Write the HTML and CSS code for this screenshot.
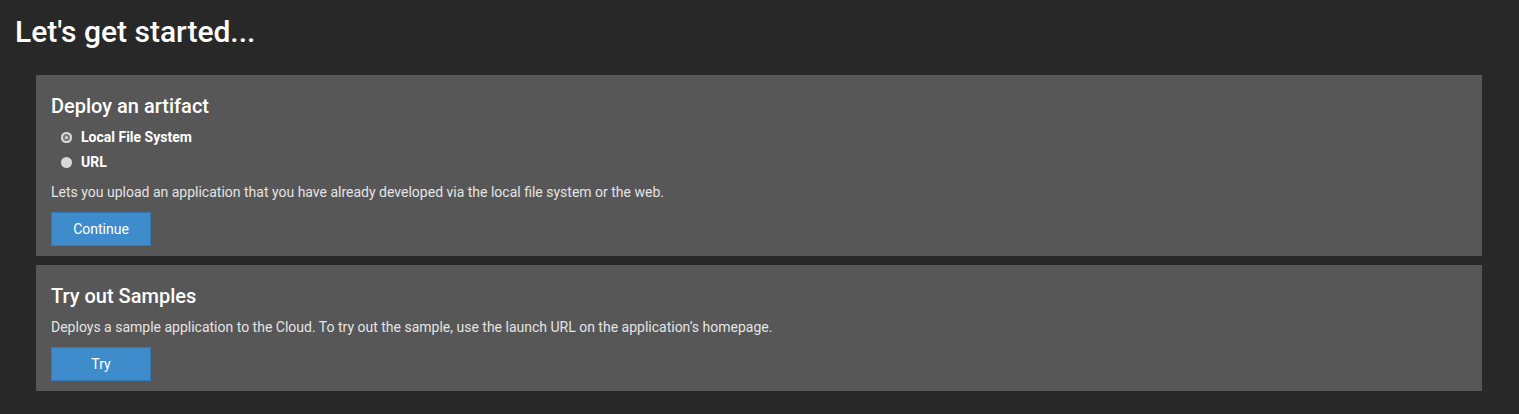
FILE: index.html
```html
<!DOCTYPE html>
<html lang="en">
<head>
    <meta charset="UTF-8">
    <title>Let's get started</title>
    <link rel="stylesheet" href="styles.css">
</head>
<body>

<h1 class="page-title">Let's get started...</h1>

<div class="cards">
    <!-- Deploy -->
    <div class="card">
        <h2>Deploy an artifact</h2>
        <label class="option"><input type="radio" name="source" checked> Local File System</label>
        <label class="option"><input type="radio" name="source"> URL</label>
        <p class="first">Lets you upload an application that you have already developed via the local file system or the web.</p>
        <button class="btn">Continue</button>
    </div>

    <!-- Samples -->
    <div class="card">
        <h2>Try out Samples</h2>
        <p>Deploys a sample application to the Cloud. To try out the sample, use the launch URL on the application’s homepage.</p>
        <button class="btn">Try</button>
    </div>
</div>

</body>
</html>
```

FILE: styles.css
```css
body {
    font-family: Roboto, "Liberation Sans", sans-serif;
    background-color: #282828;
    color: #fff;
    margin: 0;
    padding: 0 37px 0 15px;
}

.page-title {
    font-size: 30px;
    font-weight: 500;
    margin: 0;
    padding-top: 13px;
    line-height: 38px;
}

.cards {
    margin: 24px 0 0 21px;
    display: flex;
    flex-direction: column;
    gap: 9px;
}

.card {
    background-color: #575757;
    padding: 18px 15px 10px 15px;
}

.card h2 {
    font-size: 20px;
    font-weight: 500;
    margin: 0 0 6px 0;
    line-height: 26px;
}

.option {
    display: flex;
    align-items: center;
    font-size: 14px;
    font-weight: bold;
    line-height: 25px;
    padding-left: 10px;
}

.option input {
    appearance: none;
    -webkit-appearance: none;
    width: 11px;
    height: 11px;
    border-radius: 50%;
    background-color: #d9d9d9;
    margin: 0 9px 0 0;
}

.option input:checked {
    background-color: #d9d9d9;
    box-shadow: inset 0 0 0 2px #d9d9d9, inset 0 0 0 4px #7a7a7a;
}

.card p {
    font-size: 14px;
    color: #e4e4e4;
    margin: 8px 0 10px 0;
    line-height: 20px;
}

.card p.first {
    margin-top: 7px;
}

.btn {
    width: 100px;
    height: 34px;
    background-color: #3f8ccd;
    border: 1px solid #3578b4;
    color: #fff;
    font-family: Roboto, "Liberation Sans", sans-serif;
    font-size: 14px;
    cursor: pointer;
}

.btn:hover {
    background-color: #3579b5;
}
```
